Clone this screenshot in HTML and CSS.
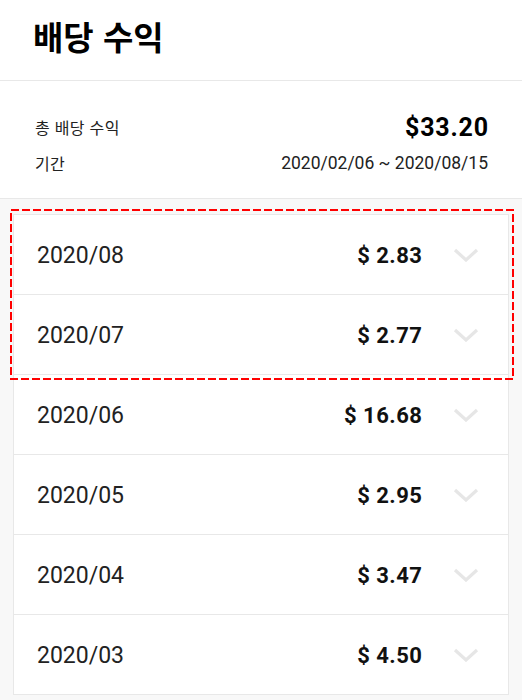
FILE: index.html
```html
<!DOCTYPE html>
<html lang="ko">
<head>
<meta charset="utf-8">
<link rel="stylesheet" href="styles.css">
</head>
<body>
<div class="page">
  <header class="header">
    <h1 class="title">배당 수익</h1>
  </header>
  <section class="summary">
    <div class="summary-row">
      <span class="label">총 배당 수익</span>
      <span class="total">$33.20</span>
    </div>
    <div class="summary-row">
      <span class="label">기간</span>
      <span class="period">2020/02/06 ~ 2020/08/15</span>
    </div>
  </section>
  <section class="list-area">
    <div class="card">
      <div class="row"><span class="month">2020/08</span><span class="amount">$ 2.83</span><svg class="chev" width="26" height="14" viewBox="0 0 26 14"><polyline points="2,2 13,12 24,2" fill="none" stroke="#e6e6e6" stroke-width="3.2"/></svg></div>
      <div class="row"><span class="month">2020/07</span><span class="amount">$ 2.77</span><svg class="chev" width="26" height="14" viewBox="0 0 26 14"><polyline points="2,2 13,12 24,2" fill="none" stroke="#e6e6e6" stroke-width="3.2"/></svg></div>
      <div class="row"><span class="month">2020/06</span><span class="amount">$ 16.68</span><svg class="chev" width="26" height="14" viewBox="0 0 26 14"><polyline points="2,2 13,12 24,2" fill="none" stroke="#e6e6e6" stroke-width="3.2"/></svg></div>
      <div class="row"><span class="month">2020/05</span><span class="amount">$ 2.95</span><svg class="chev" width="26" height="14" viewBox="0 0 26 14"><polyline points="2,2 13,12 24,2" fill="none" stroke="#e6e6e6" stroke-width="3.2"/></svg></div>
      <div class="row"><span class="month">2020/04</span><span class="amount">$ 3.47</span><svg class="chev" width="26" height="14" viewBox="0 0 26 14"><polyline points="2,2 13,12 24,2" fill="none" stroke="#e6e6e6" stroke-width="3.2"/></svg></div>
      <div class="row"><span class="month">2020/03</span><span class="amount">$ 4.50</span><svg class="chev" width="26" height="14" viewBox="0 0 26 14"><polyline points="2,2 13,12 24,2" fill="none" stroke="#e6e6e6" stroke-width="3.2"/></svg></div>
    </div>
  </section>
  <svg class="highlight" width="504" height="171" viewBox="0 0 504 171"><rect x="1" y="1" width="502" height="169" fill="none" stroke="#ff0000" stroke-width="2" stroke-dasharray="8 3"/></svg>
</div>
</body>
</html>
```
FILE: styles.css
```css
* { box-sizing: border-box; }
html, body { margin: 0; padding: 0; }
body {
  font-family: Roboto, "Noto Sans CJK KR", sans-serif;
  background: #f8f8f8;
  color: #111;
}
.page {
  position: relative;
  width: 522px;
  min-height: 700px;
  background: #f8f8f8;
}
.header {
  height: 81px;
  background: #fff;
  border-bottom: 1px solid #e8e8e8;
  padding-left: 33px;
  display: flex;
  align-items: center;
  padding-bottom: 9px;
}
.title {
  margin: 0;
  font-family: "Noto Sans CJK KR", sans-serif;
  font-size: 33px;
  font-weight: 700;
  color: #000;
}
.summary {
  height: 118px;
  background: #fff;
  border-bottom: 1px solid #e8e8e8;
  padding: 32px 34px 0 35px;
  display: flex;
  flex-direction: column;
  gap: 8px;
}
.summary-row {
  display: flex;
  justify-content: space-between;
  align-items: center;
  height: 28px;
}
.label {
  font-family: "Noto Sans CJK KR", sans-serif;
  font-size: 16px;
  letter-spacing: 0.3px;
  color: #222;
}
.total {
  font-size: 25px;
  font-weight: 700;
  letter-spacing: 0.8px;
  margin-right: -0.8px;
  color: #000;
}
.period {
  font-size: 17.5px;
  color: #222;
}
.list-area {
  padding: 15px 13px 0 13px;
}
.card {
  background: #fff;
  border: 1px solid #e8e8e8;
}
.row {
  height: 80px;
  display: flex;
  align-items: center;
  padding: 1px 29px 0 23px;
  border-top: 1px solid #e8e8e8;
}
.row:first-child {
  height: 79px;
  border-top: none;
}
.month {
  flex: 1;
  font-size: 23px;
  color: #222;
}
.amount {
  font-size: 22px;
  font-weight: 700;
  letter-spacing: 0.5px;
  margin-right: -0.5px;
  color: #111;
}
.chev {
  margin-left: 31px;
  display: block;
}
.highlight {
  position: absolute;
  left: 10px;
  top: 209px;
  display: block;
  pointer-events: none;
}
```
